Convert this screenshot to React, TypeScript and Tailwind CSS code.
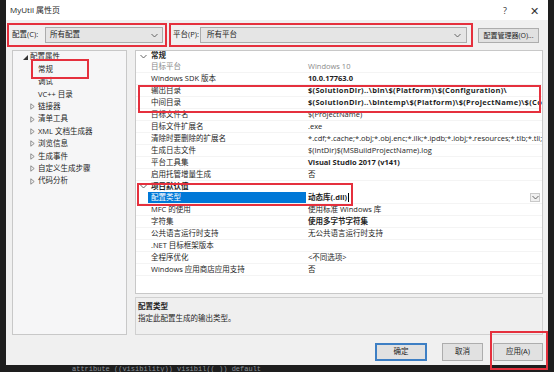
import React from 'react';

type Row = { label: string; value: string; bold?: boolean; muted?: boolean; selected?: boolean; wide?: boolean };

const general: Row[] = [
  { label: '目标平台', value: 'Windows 10', muted: true },
  { label: 'Windows SDK 版本', value: '10.0.17763.0', bold: true },
  { label: '输出目录', value: '$(SolutionDir)..\\bin\\$(Platform)\\$(Configuration)\\', bold: true, wide: true },
  { label: '中间目录', value: '$(SolutionDir)..\\bintemp\\$(Platform)\\$(ProjectName)\\$(Configuration)\\', bold: true, wide: true },
  { label: '目标文件名', value: '$(ProjectName)' },
  { label: '目标文件扩展名', value: '.exe' },
  { label: '清除时要删除的扩展名', value: '*.cdf;*.cache;*.obj;*.obj.enc;*.ilk;*.ipdb;*.iobj;*.resources;*.tlb;*.tli;*.tlh;*.tmp;*.rsp;*.pgc;*.pgd' },
  { label: '生成日志文件', value: '$(IntDir)$(MSBuildProjectName).log' },
  { label: '平台工具集', value: 'Visual Studio 2017 (v141)', bold: true },
  { label: '启用托管增量生成', value: '否' },
];

const defaults: Row[] = [
  { label: '配置类型', value: '动态库(.dll)', bold: true, selected: true },
  { label: 'MFC 的使用', value: '使用标准 Windows 库' },
  { label: '字符集', value: '使用多字节字符集', bold: true },
  { label: '公共语言运行时支持', value: '无公共语言运行时支持' },
  { label: '.NET 目标框架版本', value: '' },
  { label: '全程序优化', value: '<不同选项>' },
  { label: 'Windows 应用商店应用支持', value: '否' },
];

const tree = [
  { label: '常规', kind: 'leaf' },
  { label: '调试', kind: 'leaf' },
  { label: 'VC++ 目录', kind: 'leaf' },
  { label: '链接器', kind: 'node' },
  { label: '清单工具', kind: 'node' },
  { label: 'XML 文档生成器', kind: 'node' },
  { label: '浏览信息', kind: 'node' },
  { label: '生成事件', kind: 'node' },
  { label: '自定义生成步骤', kind: 'node' },
  { label: '代码分析', kind: 'node' },
];

function Chevron({ className = '' }: { className?: string }) {
  return (
    <svg width="7" height="5" viewBox="0 0 7 5" className={className}>
      <path d="M0.5 1 L3.5 4 L6.5 1" fill="none" stroke="#555" strokeWidth="0.9" />
    </svg>
  );
}

function Collapsed() {
  return (
    <svg width="5" height="7" viewBox="0 0 5 7" className="shrink-0">
      <path d="M0.8 0.8 L4.2 3.5 L0.8 6.2 Z" fill="none" stroke="#777" strokeWidth="0.8" />
    </svg>
  );
}

function Expanded() {
  return (
    <svg width="5" height="5" viewBox="0 0 5 5" className="shrink-0">
      <path d="M5 0 L5 5 L0 5 Z" fill="#333" />
    </svg>
  );
}

function GridRow({ row }: { row: Row }) {
  return (
    <div className="flex h-[12px] items-center border-b border-[#f4f4f4]">
      <div className="w-[12px] shrink-0" />
      <div
        className={`flex h-full w-[158px] shrink-0 items-center pl-[3px] ${
          row.selected ? 'bg-[#0078d7] text-white' : row.muted ? 'text-[#8a8a8a]' : ''
        }`}
      >
        {row.label}
      </div>
      <div className="relative flex h-full min-w-0 flex-1 items-center pl-[2px]">
        <span
          className={`whitespace-nowrap ${row.bold ? 'font-bold' : ''} ${row.muted ? 'text-[#8a8a8a]' : ''} ${
            row.wide ? 'tracking-[0.3px]' : ''
          }`}
        >
          {row.value}
        </span>
        {row.selected && (
          <>
            <span className="ml-[1px] h-[9px] w-px bg-black" />
            <div className="absolute right-[2px] top-[1px] flex h-[9px] w-[10px] items-center justify-center border border-[#c9c9c9] bg-[#f0f0f0]">
              <Chevron />
            </div>
          </>
        )}
      </div>
    </div>
  );
}

function Section({ title }: { title: string }) {
  return (
    <div className="flex h-[11px] items-center">
      <div className="flex w-[15px] shrink-0 justify-end pr-[4px]">
        <Chevron />
      </div>
      <span className="font-bold">{title}</span>
    </div>
  );
}

export default function App() {
  return (
    <div className="relative h-[372px] w-[554px] overflow-hidden bg-[#1e1e1e] font-['Open_Sans','Noto_Sans_CJK_SC',sans-serif] text-[7.5px] leading-none text-[#1e1e1e]">
      <div className="ml-[6px] flex h-[365px] w-[542px] flex-col bg-[#f0f0f0]">
        {/* title bar */}
        <div className="flex h-[20px] items-center bg-white pl-[4px] text-[8px]">
          <span className="flex-1">MyUtil 属性页</span>
          <span className="mr-[23px] text-[9px] text-[#333]">?</span>
          <span className="mr-[9px] text-[11px] font-light text-[#333]">✕</span>
        </div>

        {/* configuration row */}
        <div className="flex h-[30px] items-center pl-[6px]">
          <span className="w-[33px]">配置(C):</span>
          <div className="flex h-[16px] w-[118px] items-center justify-between border border-[#acacac] bg-[#e5e5e5] pl-[4px] pr-[4px]">
            <span>所有配置</span>
            <Chevron />
          </div>
          <span className="ml-[10px] w-[27px]">平台(P):</span>
          <div className="flex h-[16px] w-[267px] items-center justify-between border border-[#acacac] bg-[#e5e5e5] pl-[6px] pr-[5px]">
            <span>所有平台</span>
            <Chevron />
          </div>
          <div className="ml-[11px] flex h-[15px] w-[61px] items-center justify-center whitespace-nowrap border border-[#adadad] bg-[#e1e1e1] text-[7px]">
            配置管理器(O)...
          </div>
        </div>

        {/* main */}
        <div className="flex h-[285px]">
          <div className="ml-[6px] h-full w-[115px] border border-[#c8c8c8] bg-[#f6f6f7]">
            <div className="flex h-[12.4px] items-center pl-[10px]">
              <Expanded />
              <span className="ml-[2px]">配置属性</span>
            </div>
            {tree.map((t) => (
              <div key={t.label} className="flex h-[12.4px] items-center pl-[17px]">
                {t.kind === 'node' ? <Collapsed /> : <span className="w-[5px]" />}
                <span className="ml-[3px]">{t.label}</span>
              </div>
            ))}
          </div>

          <div className="ml-[8px] flex w-[408px] flex-col">
            <div className="h-[244px] overflow-hidden border border-[#c8c8c8] bg-white">
              <div className="flex h-[10px] items-center">
                <div className="flex w-[15px] shrink-0 justify-end pr-[4px]">
                  <Chevron />
                </div>
                <span className="font-bold">常规</span>
              </div>
              {general.map((r) => (
                <GridRow key={r.label} row={r} />
              ))}
              <Section title="项目默认值" />
              {defaults.map((r) => (
                <GridRow key={r.label} row={r} />
              ))}
            </div>
            <div className="mt-[3px] h-[38px] border border-[#d0d0d0] bg-[#efefef] pl-[2px] pt-[5px]">
              <div className="font-bold">配置类型</div>
              <div className="mt-[4px]">指定此配置生成的输出类型。</div>
            </div>
          </div>
        </div>

        {/* footer */}
        <div className="flex h-[30px] items-start pt-[8px]">
          <div className="ml-[369px] flex h-[18px] w-[52px] items-center justify-center border-2 border-[#3d7fc4] bg-[#e1e1e1]">
            确定
          </div>
          <div className="ml-[15px] flex h-[18px] w-[41px] items-center justify-center border border-[#adadad] bg-[#e1e1e1]">
            取消
          </div>
          <div className="ml-[10px] flex h-[18px] w-[50px] items-center justify-center border border-[#adadad] bg-[#e1e1e1]">
            应用(A)
          </div>
        </div>
      </div>

      <div className="whitespace-nowrap pl-[72px] pt-[1px] font-['Liberation_Mono',monospace] text-[7px] text-[#8a929a]">
        attribute ((visibility))   visibil(( )) default
      </div>

      {/* annotation boxes */}
      <div className="pointer-events-none absolute left-[7px] top-[23px] h-[24px] w-[160px] border-2 border-[#e5303d]" />
      <div className="pointer-events-none absolute left-[169px] top-[23px] h-[24px] w-[304px] border-2 border-[#e5303d]" />
      <div className="pointer-events-none absolute left-[31px] top-[59px] h-[20px] w-[58px] border-2 border-[#e5303d]" />
      <div className="pointer-events-none absolute left-[138px] top-[85px] h-[28px] w-[403px] border-2 border-[#e5303d]" />
      <div className="pointer-events-none absolute left-[137px] top-[183px] h-[23px] w-[216px] border-2 border-[#e5303d]" />
      <div className="pointer-events-none absolute left-[490px] top-[331px] h-[39px] w-[58px] border-2 border-[#e5303d]" />
    </div>
  );
}
